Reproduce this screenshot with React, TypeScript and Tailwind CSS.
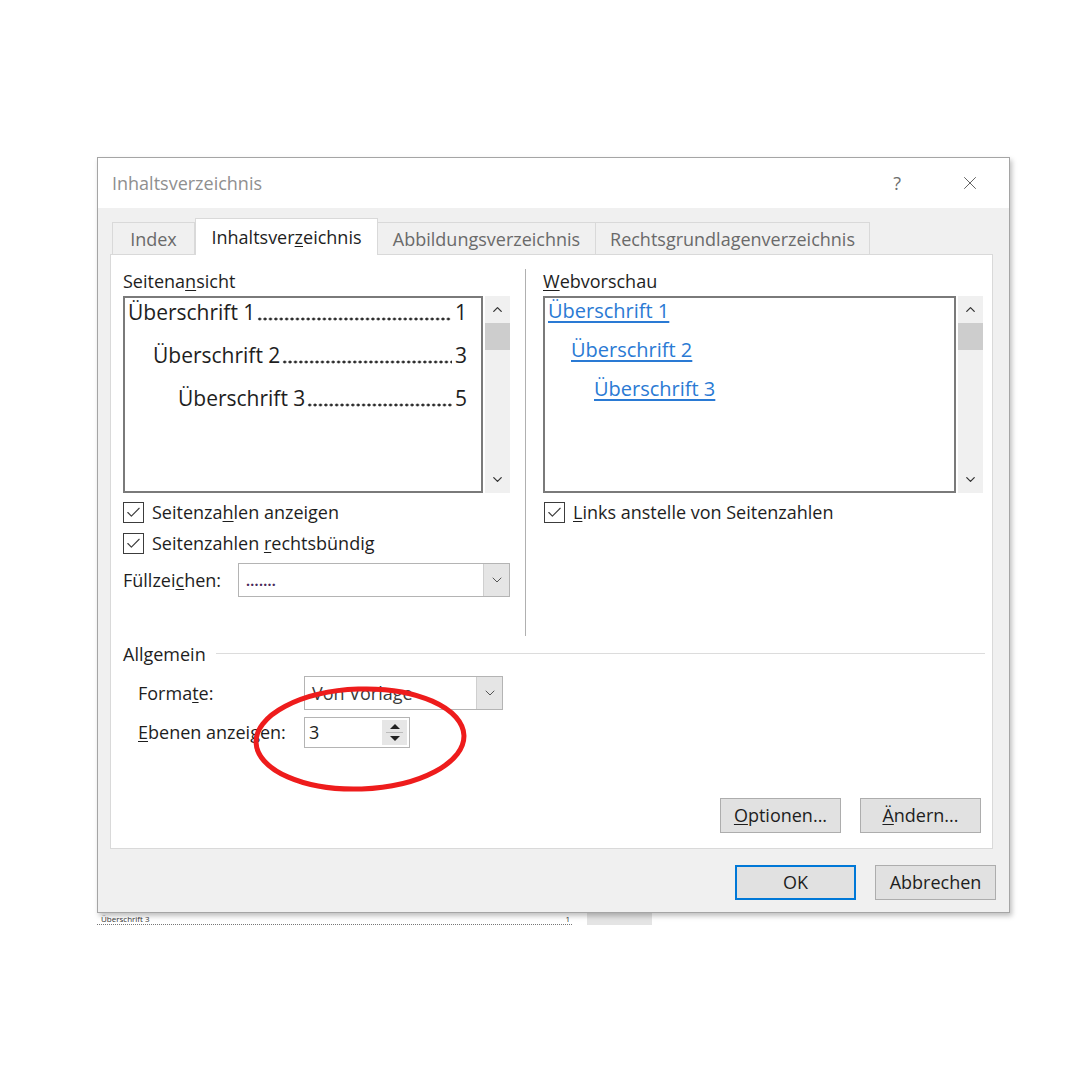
import { ChevronDown, ChevronUp, X, Check } from "lucide-react";
import type { ReactNode } from "react";

const font = "font-['Open_Sans','Noto_Sans',sans-serif]";

function U({ children }: { children: ReactNode }) {
  return <span className="underline underline-offset-2">{children}</span>;
}

function Scrollbar() {
  return (
    <div className="w-[25px] h-full bg-[#f0f0f0] flex flex-col">
      <div className="h-[27px] flex items-center justify-center text-[#333]">
        <ChevronUp size={15} strokeWidth={2} />
      </div>
      <div className="h-[27px] bg-[#cdcdcd]" />
      <div className="flex-1" />
      <div className="h-[27px] flex items-center justify-center text-[#333]">
        <ChevronDown size={15} strokeWidth={2} />
      </div>
    </div>
  );
}

function CheckRow({ children }: { children: ReactNode }) {
  return (
    <div className="flex items-center h-[24px] gap-[8px] text-[18px] text-[#1e1e1e]">
      <div className="w-[21px] h-[21px] border border-[#3c3c3c] bg-white flex items-center justify-center text-[#3c3c3c]">
        <Check size={17} strokeWidth={1.6} />
      </div>
      <span>{children}</span>
    </div>
  );
}

// dot leader drawn as a repeating dot pattern
function TocLine({ label, page, indent }: { label: string; page: string; indent: string }) {
  return (
    <div className={`flex items-center h-[28px] text-[21px] text-[#1e1e1e] pr-[14px] ${indent}`}>
      <span className="whitespace-nowrap">{label}</span>
      <div className="flex-1 min-w-0 h-[4px] mt-[12px] ml-[2px] mr-[3px] bg-[radial-gradient(circle,#2a2a2a_1.3px,transparent_1.7px)] bg-[length:5.4px_4px] bg-repeat-x" />
      <span>{page}</span>
    </div>
  );
}

function Combo({ width, children }: { width: string; children: ReactNode }) {
  return (
    <div className={`flex h-[34px] border border-[#b4b4b4] bg-white ${width}`}>
      <div className="flex-1 flex items-center px-[7px] overflow-hidden">{children}</div>
      <div className="w-[26px] bg-[#e5e5e5] border-l border-[#cfcfcf] flex items-center justify-center text-[#555]">
        <ChevronDown size={16} strokeWidth={1.5} />
      </div>
    </div>
  );
}

function Btn({ children, primary }: { children: ReactNode; primary?: boolean }) {
  return (
    <div
      className={`h-[35px] w-[121px] flex items-center justify-center bg-[#e1e1e1] text-[18px] text-[#1e1e1e] ${
        primary ? "border-2 border-[#0078d7]" : "border border-[#adadad]"
      }`}
    >
      {children}
    </div>
  );
}

export default function App() {
  return (
    <div className={`w-[1080px] h-[1080px] bg-white pt-[157px] pl-[97px] ${font}`}>
      <div className="relative w-[913px] h-[756px] border border-[#a5a5a5] bg-[#f0f0f0] shadow-[2px_3px_5px_rgba(0,0,0,0.25)] flex flex-col">
        {/* title bar */}
        <div className="h-[50px] bg-white flex items-center pl-[14px] pr-[28px] text-[18px]">
          <span className="text-[#8f8f8f]">Inhaltsverzeichnis</span>
          <span className="ml-auto text-[#6e6e6e] mr-[58px]">?</span>
          <X size={22} strokeWidth={1} className="text-[#555]" />
        </div>

        {/* tabs */}
        <div className="h-[47px] flex items-end pl-[14px] text-[18px] -mb-[1px] relative z-10">
          <div className="h-[33px] w-[83px] border border-b-0 border-[#d9d9d9] flex items-center justify-center text-[#6a6a6a]">
            Index
          </div>
          <div className="h-[37px] w-[183px] border border-b-0 border-[#d9d9d9] bg-white flex items-center justify-center text-[#1e1e1e]">
            Inhaltsver<U>z</U>eichnis
          </div>
          <div className="h-[33px] w-[218px] border border-b-0 border-l-0 border-[#d9d9d9] flex items-center justify-center text-[#6a6a6a]">
            Abbildungsverzeichnis
          </div>
          <div className="h-[33px] w-[274px] border border-b-0 border-l-0 border-[#d9d9d9] flex items-center justify-center text-[#6a6a6a]">
            Rechtsgrundlagenverzeichnis
          </div>
        </div>

        {/* panel */}
        <div className="ml-[12px] w-[883px] h-[595px] border border-[#d9d9d9] bg-white flex flex-col text-[18px] text-[#1e1e1e]">
          <div className="flex pt-[15px] pl-[12px]">
            {/* left */}
            <div className="w-[387px] flex flex-col">
              <div className="leading-[22px]">
                Seitena<U>n</U>sicht
              </div>
              <div className="flex h-[197px] gap-[2px] mt-[4px]">
                <div className="w-[360px] h-full border-2 border-[#7a7a7a] flex flex-col gap-[15px] pt-[1px] pl-[3px]">
                  <TocLine label="Überschrift 1 " page="1" indent="" />
                  <TocLine label="Überschrift 2" page="3" indent="pl-[25px]" />
                  <TocLine label="Überschrift 3" page="5" indent="pl-[50px]" />
                </div>
                <Scrollbar />
              </div>
              <div className="mt-[7px] flex flex-col gap-[7px]">
                <CheckRow>
                  Seitenza<U>h</U>len anzeigen
                </CheckRow>
                <CheckRow>
                  Seitenzahlen <U>r</U>echtsbündig
                </CheckRow>
              </div>
              <div className="flex items-center mt-[8px]">
                <span className="w-[115px]">
                  Füllzei<U>c</U>hen:
                </span>
                <Combo width="w-[272px]">
                  <span className="text-[#4a2a5a] text-[14px] font-bold tracking-[0.3px]">.......</span>
                </Combo>
              </div>
            </div>

            {/* separator */}
            <div className="w-[1px] h-[367px] bg-[#b0b0b0] ml-[15px] -mt-[1px]" />

            {/* right */}
            <div className="w-[440px] ml-[17px] flex flex-col">
              <div className="leading-[22px]">
                <U>W</U>ebvorschau
              </div>
              <div className="flex h-[197px] gap-[2px] mt-[4px]">
                <div className="w-[413px] h-full border-2 border-[#7a7a7a] flex flex-col items-start gap-[13px] pl-[3px] text-[20px] leading-[26px] text-[#2a7ad4]">
                  <span className="underline underline-offset-3">Überschrift 1</span>
                  <span className="underline underline-offset-3 ml-[23px]">Überschrift 2</span>
                  <span className="underline underline-offset-3 ml-[46px]">Überschrift 3</span>
                </div>
                <Scrollbar />
              </div>
              <div className="mt-[7px] pl-[1px]">
                <CheckRow>
                  <U>L</U>inks anstelle von Seitenzahlen
                </CheckRow>
              </div>
            </div>
          </div>

          {/* Allgemein */}
          <div className="flex items-center pl-[12px] mt-[7px] h-[22px]">
            <span>Allgemein</span>
            <div className="flex-1 h-[1px] bg-[#dcdcdc] ml-[10px] mr-[7px] -mt-[2px]" />
          </div>
          <div className="pl-[27px] mt-[11px] flex flex-col gap-[7px]">
            <div className="flex items-center">
              <span className="w-[166px]">
                Forma<U>t</U>e:
              </span>
              <Combo width="w-[199px]">
                <span className="text-[#3a3a3a]">Von Vorlage</span>
              </Combo>
            </div>
            <div className="flex items-center">
              <span className="w-[166px]">
                <U>E</U>benen anzeigen:
              </span>
              <div className="w-[106px] h-[31px] border border-[#b4b4b4] bg-white flex">
                <span className="flex-1 flex items-center pl-[4px]">3</span>
                <div className="w-[25px] my-[2px] mr-[2px] bg-[#e6e6e6] flex flex-col items-center justify-center gap-[3px]">
                  <div className="w-0 h-0 border-x-[5px] border-x-transparent border-b-[5px] border-b-[#222]" />
                  <div className="w-[17px] h-[1px] bg-[#bbb]" />
                  <div className="w-0 h-0 border-x-[5px] border-x-transparent border-t-[5px] border-t-[#222]" />
                </div>
              </div>
            </div>
          </div>
          <div className="mt-auto mb-[15px] mr-[11px] flex justify-end gap-[19px]">
            <Btn>
              <U>O</U>ptionen...
            </Btn>
            <Btn>
              <U>Ä</U>ndern...
            </Btn>
          </div>
        </div>

        {/* footer */}
        <div className="flex justify-end gap-[19px] pt-[16px] pr-[13px]">
          <Btn primary>OK</Btn>
          <Btn>Abbrechen</Btn>
        </div>

        {/* hand-drawn red mark */}
        <svg
          className="absolute left-[152px] top-[525px]"
          width="220"
          height="112"
          viewBox="0 0 220 112"
        >
          <ellipse cx="110" cy="56" rx="104" ry="50" fill="none" stroke="#ee1c1c" strokeWidth="5" transform="rotate(-2 110 56)" />
        </svg>
      </div>

      {/* document behind the dialog */}
      <div className="flex items-center h-[12px] w-[560px]">
        <div className="w-[475px] flex items-end text-[8px] leading-[10px] text-[#333] border-b border-dotted border-[#777] pl-[4px]">
          <span>Überschrift 3</span>
          <span className="ml-auto pr-[2px]">1</span>
        </div>
        <div className="ml-[15px] w-[65px] h-[12px] bg-[#e4e4e4]" />
      </div>
    </div>
  );
}
